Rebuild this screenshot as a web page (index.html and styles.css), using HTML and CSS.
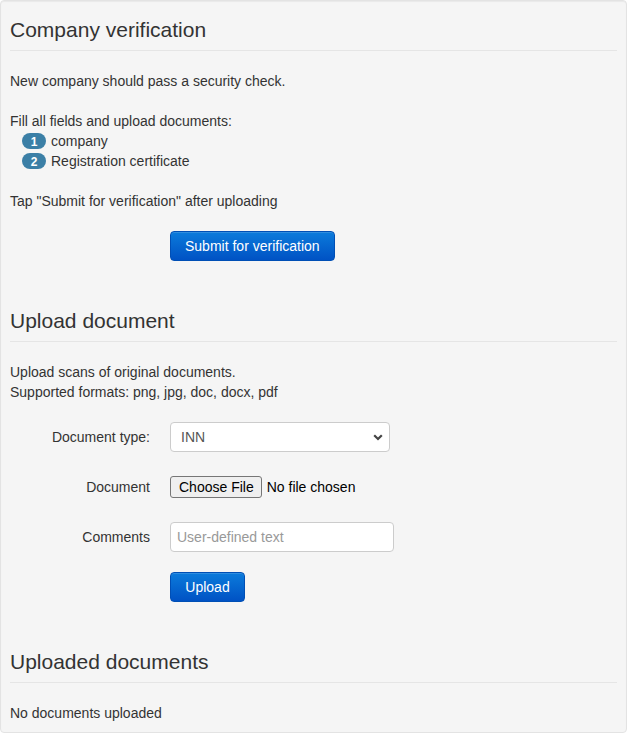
FILE: index.html
```html
<!DOCTYPE html>
<html lang="en">
<head>
<meta charset="utf-8">
<title>Company verification</title>
<link rel="stylesheet" href="styles.css">
</head>
<body>
<div class="well">
  <section class="section">
    <h2 class="legend">Company verification</h2>
    <p class="text">New company should pass a security check.</p>
    <p class="text gap">Fill all fields and upload documents:</p>
    <ol class="doc-list">
      <li><span class="badge">1</span>company</li>
      <li><span class="badge">2</span>Registration certificate</li>
    </ol>
    <p class="text gap">Tap "Submit for verification" after uploading</p>
    <div class="form-row offset">
      <span class="label"></span>
      <button class="btn" type="button">Submit for verification</button>
    </div>
  </section>

  <section class="section">
    <h2 class="legend">Upload document</h2>
    <p class="text">Upload scans of original documents.<br>Supported formats: png, jpg, doc, docx, pdf</p>
    <div class="form">
      <div class="form-row">
        <label class="label" for="doctype">Document type:</label>
        <div class="select-wrap">
          <select id="doctype" class="control select">
            <option>INN</option>
          </select>
          <svg class="chev" width="10" height="7" viewBox="0 0 10 7"><path d="M1.2 1.2 L5 5 L8.8 1.2" fill="none" stroke="#444" stroke-width="2.2"/></svg>
        </div>
      </div>
      <div class="form-row">
        <label class="label" for="docfile">Document</label>
        <div class="file">
          <span class="file-btn">Choose File</span><span class="file-text">No file chosen</span>
        </div>
      </div>
      <div class="form-row">
        <label class="label" for="comments">Comments</label>
        <input id="comments" class="control input" type="text" placeholder="User-defined text">
      </div>
      <div class="form-row">
        <span class="label"></span>
        <button class="btn btn-upload" type="button">Upload</button>
      </div>
    </div>
  </section>

  <section class="section">
    <h2 class="legend">Uploaded documents</h2>
    <p class="text">No documents uploaded</p>
  </section>
</div>
</body>
</html>
```

FILE: styles.css
```css
* { box-sizing: border-box; }
html, body {
  margin: 0;
  padding: 0;
  background: #ffffff;
}
body {
  font-family: "Liberation Sans", Arial, sans-serif;
  font-size: 14px;
  line-height: 20px;
  color: #333333;
}
.well {
  width: 627px;
  background: #f5f5f5;
  border: 1px solid #e3e3e3;
  border-radius: 4px;
  box-shadow: inset 0 1px 1px rgba(0, 0, 0, 0.05);
  padding: 9px;
}
.section + .section {
  margin-top: 40px;
}
.legend {
  margin: 0 0 20px 0;
  font-size: 21px;
  font-weight: normal;
  line-height: 40px;
  height: 41px;
  color: #333333;
  border-bottom: 1px solid #e5e5e5;
}
.text {
  margin: 0;
}
.gap {
  margin-top: 20px;
}
.doc-list {
  list-style: none;
  margin: 0;
  padding: 0 0 0 12px;
}
.doc-list li {
  display: flex;
  align-items: center;
  height: 20px;
}
.badge {
  display: inline-flex;
  align-items: center;
  justify-content: center;
  width: 24px;
  height: 16px;
  margin-right: 5px;
  border-radius: 8px;
  background: #3b7fa6;
  color: #ffffff;
  font-size: 12px;
  font-weight: bold;
  line-height: 1;
  padding-top: 1px;
}
.offset {
  margin-top: 20px;
}
.form {
  margin-top: 20px;
  display: flex;
  flex-direction: column;
  gap: 20px;
}
.form-row {
  display: grid;
  grid-template-columns: 140px auto;
  column-gap: 20px;
  align-items: center;
  justify-items: start;
  min-height: 30px;
}
.label {
  justify-self: end;
  font-weight: normal;
}
.btn {
  height: 30px;
  padding: 0 14px;
  font-family: "Liberation Sans", Arial, sans-serif;
  font-size: 14px;
  color: #ffffff;
  background: linear-gradient(to bottom, #0b7bdb 0%, #0052c4 100%);
  border: 1px solid #004fb5;
  border-radius: 4px;
  box-shadow: inset 0 1px 0 rgba(255, 255, 255, 0.15);
  cursor: pointer;
}
.btn-upload {
  width: 75px;
  padding: 0;
}
.select-wrap {
  position: relative;
  width: 220px;
  height: 30px;
}
.control {
  font-family: "Liberation Sans", Arial, sans-serif;
  font-size: 14px;
  color: #555555;
  background: #ffffff;
  border: 1px solid #cccccc;
  border-radius: 4px;
  height: 30px;
}
.select {
  width: 220px;
  padding: 0 10px;
  -webkit-appearance: none;
  appearance: none;
}
.chev {
  position: absolute;
  right: 7px;
  top: 12px;
  pointer-events: none;
}
.input {
  width: 224px;
  padding: 0 6px;
}
.input::placeholder {
  color: #999999;
}
.file {
  display: flex;
  align-items: center;
  height: 30px;
}
.file-btn {
  display: inline-flex;
  align-items: center;
  height: 22px;
  padding: 0 7px 0 8px;
  background: #efefef;
  border: 1px solid #767676;
  border-radius: 3px;
  color: #000000;
  font-size: 14px;
}
.file-text {
  margin-left: 5px;
  color: #000000;
}
```
